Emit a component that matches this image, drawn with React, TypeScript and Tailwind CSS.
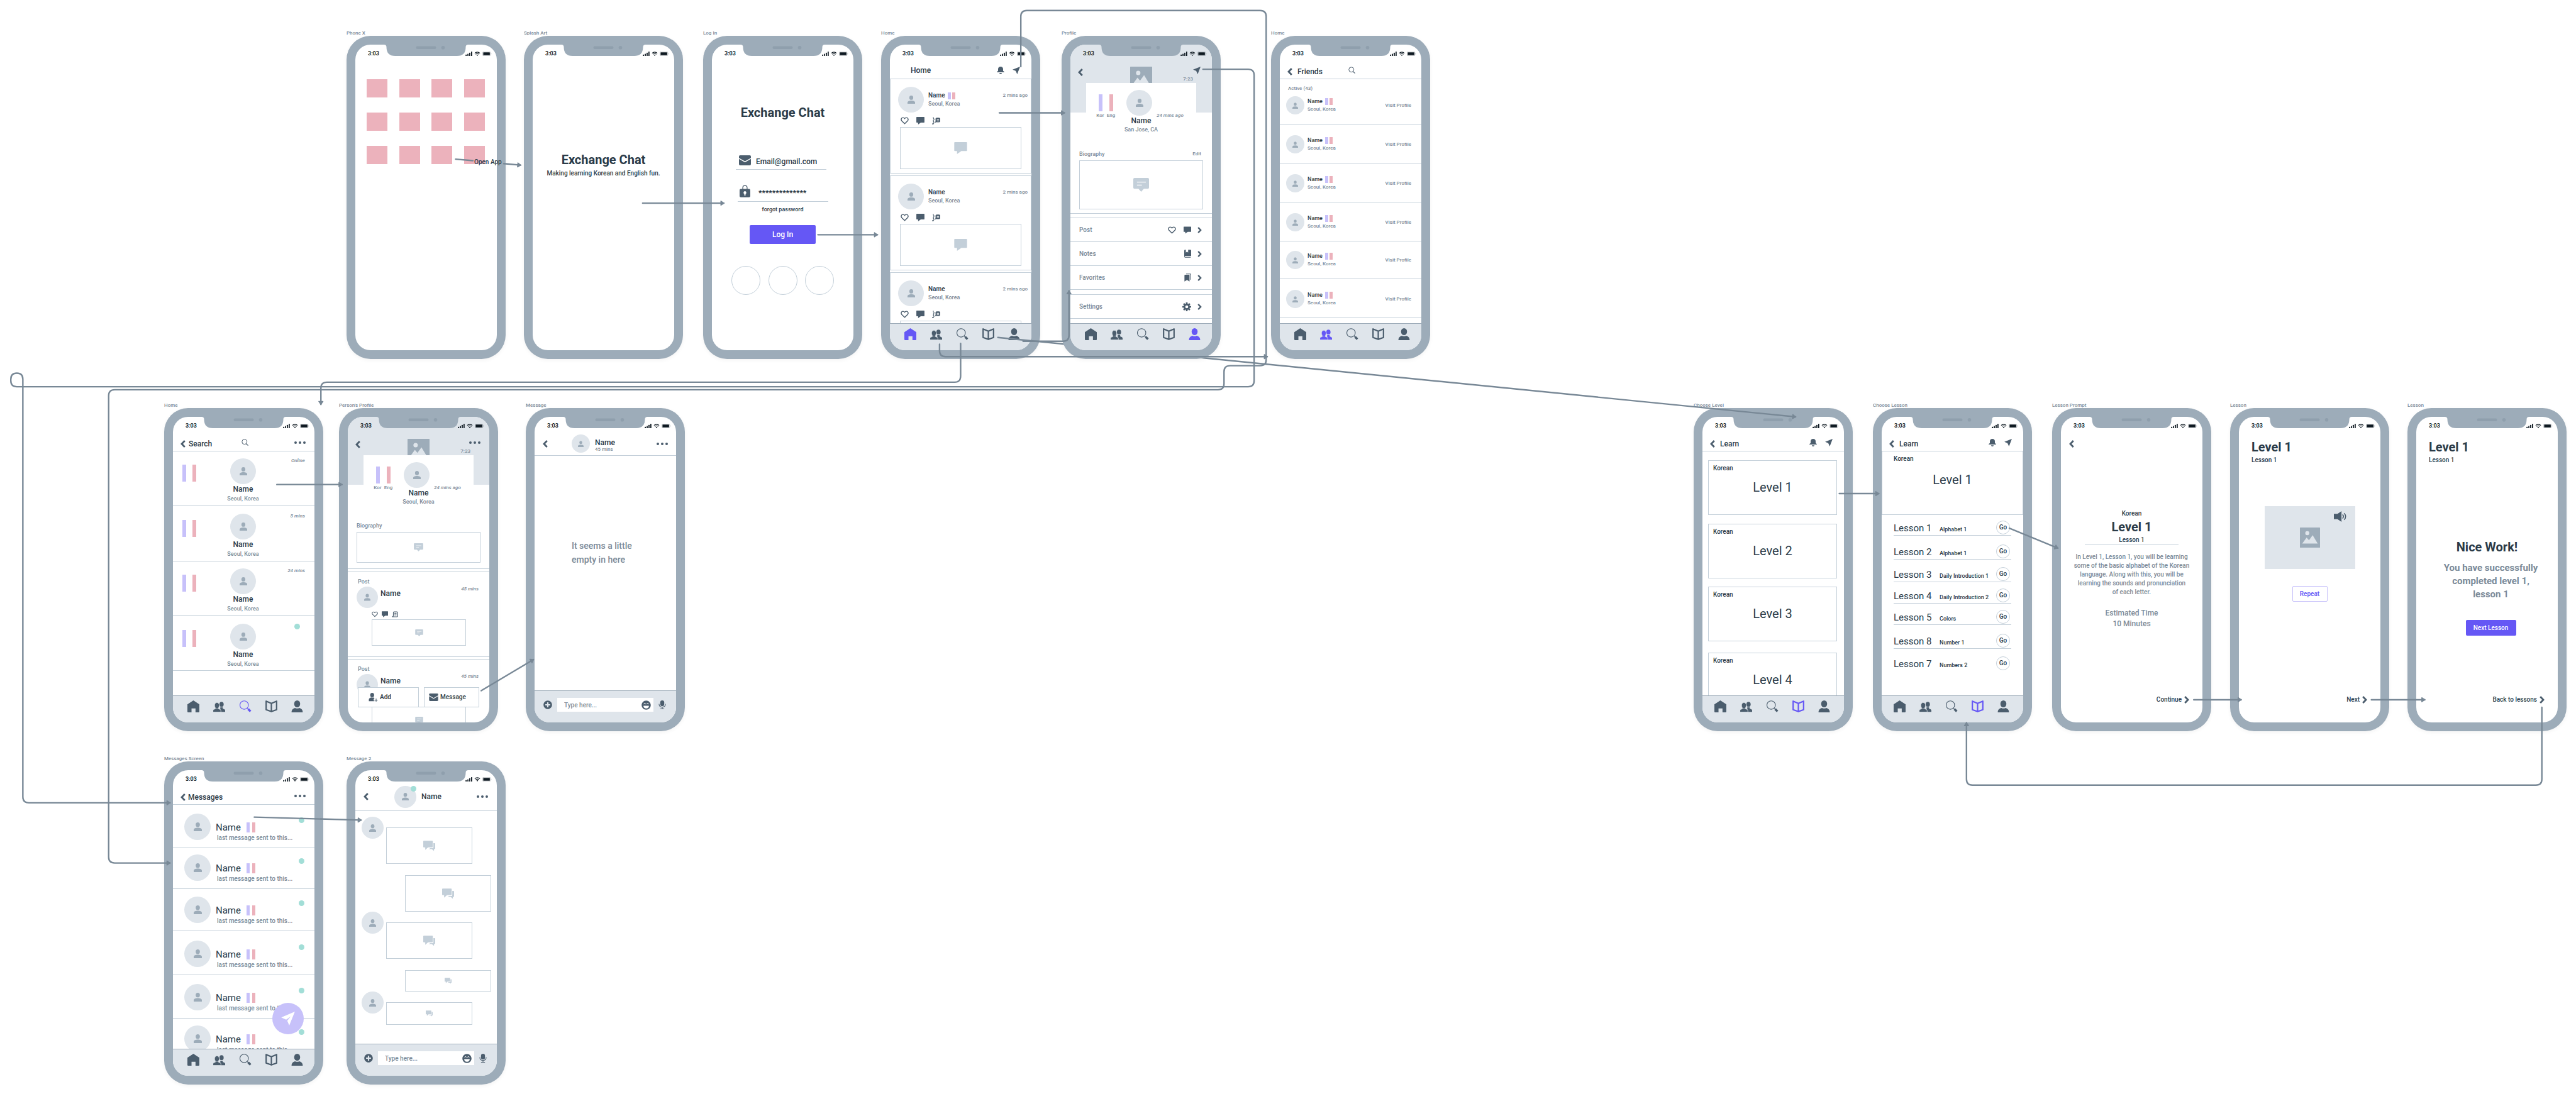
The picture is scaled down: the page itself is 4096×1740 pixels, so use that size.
import type { ReactNode } from "react";
import { FaLaughBeam, FaPlusCircle } from "react-icons/fa";

/* ---------------------------------- icons --------------------------------- */

type IconProps = { className?: string };

const PersonIcon = ({ className }: IconProps) => (
  <svg viewBox="0 0 60 65" fill="currentColor" className={className} aria-hidden="true">
    <ellipse cx="30" cy="17" rx="15.5" ry="17" />
    <path d="M0 65V55c0-10 14-15 30-15s30 5 30 15v10z" />
  </svg>
);

const HomeIcon = ({ className }: IconProps) => (
  <svg viewBox="0 0 96 96" fill="currentColor" className={className} aria-hidden="true">
    <path d="M48 0l48 31v59q0 6-6 6H65V64H33v32H6q-6 0-6-6V31z" />
  </svg>
);

const PeopleIcon = ({ className }: IconProps) => (
  <svg viewBox="0 0 96 96" fill="currentColor" className={className} aria-hidden="true">
    <ellipse cx="67" cy="31" rx="17" ry="20" />
    <path d="M96 92V81c0-8-8-10-17-14-3-1-3-5-2-11H57v36z" />
    <g stroke="#dfe5eb" strokeWidth="4">
      <path d="M-2 94V82c0-9 10-11 18-14 4-2 4-6 3-12h22c-1 6-1 10 3 12 8 3 18 5 18 14v12z" />
      <ellipse cx="30" cy="40" rx="19" ry="23" />
    </g>
    <path d="M20 50h20l1 12H19z" />
  </svg>
);

const NavSearchIcon = ({ className }: IconProps) => (
  <svg viewBox="0 0 92 92" fill="none" stroke="currentColor" className={className} aria-hidden="true">
    <circle cx="35" cy="36" r="32.5" strokeWidth="5.5" />
    <path d="M58 60l10 10" strokeWidth="5" />
    <path d="M66 67l18 18" strokeWidth="17" />
  </svg>
);

const BookIcon = ({ className }: IconProps) => (
  <svg viewBox="0 0 96 96" fill="none" stroke="currentColor" strokeWidth="11" strokeLinejoin="round" className={className} aria-hidden="true">
    <path d="M6 6l42 18L90 6v68L48 90 6 74zM48 24v66" />
  </svg>
);

const UserIcon = ({ className }: IconProps) => (
  <svg viewBox="0 0 90 96" fill="currentColor" className={className} aria-hidden="true">
    <ellipse cx="45" cy="28" rx="24" ry="28" />
    <path d="M0 96c0-20 9-31 28-36 11 6 23 6 34 0 19 5 28 16 28 36z" />
  </svg>
);

const BellIcon = ({ className }: IconProps) => (
  <svg viewBox="0 0 60 60" fill="currentColor" className={className} aria-hidden="true">
    <path d="M30 0c12 0 20 8 20 20v14l8 6q2 2 2 5H0q0-3 2-5l8-6V20C10 8 18 0 30 0z" />
    <path d="M20 51h20c0 5-4 9-10 9s-10-4-10-9z" />
  </svg>
);

const SendIcon = ({ className }: IconProps) => (
  <svg viewBox="0 0 60 60" fill="currentColor" className={className} aria-hidden="true">
    <path d="M60 0L0 24l25 10 12 26z" />
  </svg>
);

const PlaneIcon = ({ className }: IconProps) => (
  <svg viewBox="0 0 61 62" fill="currentColor" className={className} aria-hidden="true">
    <path d="M61 0L0 26l22 10 21-15-16 20 9 21z" />
  </svg>
);

const HeartIcon = ({ className }: IconProps) => (
  <svg viewBox="0 0 63 56" fill="none" stroke="currentColor" strokeWidth="7" strokeLinejoin="round" className={className} aria-hidden="true">
    <path d="M31.500 51L9 29C0 19 6 4.500 18 4.500c6 0 11 3 13.500 8C34 7.500 39 4.500 45 4.500c12 0 18 14.500 9 24.500z" />
  </svg>
);

const ChatIcon = ({ className }: IconProps) => (
  <svg viewBox="0 0 60 56" fill="currentColor" className={className} aria-hidden="true">
    <path d="M3 0h54a3 3 0 013 3v36a3 3 0 01-3 3H33L13 56V42H3a3 3 0 01-3-3V3a3 3 0 013-3z" />
  </svg>
);

const TranslateIcon = ({ className }: IconProps) => (
  <svg viewBox="0 0 63 56" fill="none" stroke="currentColor" className={className} aria-hidden="true">
    <path d="M10 0v9l7 7-8 11 5 6-5 5 6 6-5 9H2v-5" strokeWidth="5" />
    <path d="M22 41c5-2 7-5 7-9V13q0-6 6-6h20q6 0 6 6v19q0 6-6 6H30z" fill="currentColor" strokeWidth="4" />
    <path d="M37 19h17M37 29h17" stroke="#fff" strokeWidth="5" />
  </svg>
);

const ScrollIcon = ({ className }: IconProps) => (
  <svg viewBox="0 0 60 56" fill="none" stroke="currentColor" strokeWidth="7" strokeLinejoin="round" className={className} aria-hidden="true">
    <path d="M4 52c7-2 11-7 11-14V12q0-8 8-8h24q8 0 8 8v32q0 8-8 8z" />
    <path d="M25 18h20M25 34h20" />
  </svg>
);

const NoteBubbleIcon = ({ className }: IconProps) => (
  <svg viewBox="0 0 64 56" fill="currentColor" className={className} aria-hidden="true">
    <path d="M5 0h54a5 5 0 015 5v34a5 5 0 01-5 5H43L32 56 21 44H5a5 5 0 01-5-5V5a5 5 0 015-5z" />
    <path d="M15 17h36M15 29h20" stroke="#fff" strokeWidth="3" />
  </svg>
);

const ChatsIcon = ({ className }: IconProps) => (
  <svg viewBox="0 0 60 52" fill="currentColor" className={className} aria-hidden="true">
    <path d="M51 12h6q3 0 3 3v24q0 3-3 3h-3v9l-11-9H27l9-5h12q3 0 3-4z" />
    <path d="M3 0h42q3 0 3 3v27q0 3-3 3H24L10 46V33H3q-3 0-3-3V3q0-3 3-3z" />
  </svg>
);

const MailIcon = ({ className }: IconProps) => (
  <svg viewBox="0 0 60 50" fill="currentColor" className={className} aria-hidden="true">
    <path d="M6 0h48a6 6 0 016 6v7L30 30 0 13V6a6 6 0 016-6z" />
    <path d="M0 18l30 17 30-17v26a6 6 0 01-6 6H6a6 6 0 01-6-6z" />
  </svg>
);

const LockIcon = ({ className }: IconProps) => (
  <svg viewBox="0 0 54 62" fill="currentColor" className={className} aria-hidden="true">
    <path d="M16 22V14a11 11 0 0122 0v8" fill="none" stroke="currentColor" strokeWidth="4" />
    <rect y="20" width="54" height="42" rx="6" />
    <path d="M27 31a8 8 0 013 15v7h-6v-7a8 8 0 013-15z" fill="#fff" />
  </svg>
);

const PictureIcon = ({ className }: IconProps) => (
  <svg viewBox="0 0 60 60" className={className} aria-hidden="true">
    <rect width="60" height="60" rx="1" fill="#9dacb9" />
    <circle cx="22" cy="17" r="6" fill="#dfe5eb" />
    <path d="M7 48l13-18 7 8 11-15 15 25z" fill="#dfe5eb" />
  </svg>
);

const ChevronIcon = ({ className }: IconProps) => (
  <svg viewBox="0 0 20 30" fill="none" stroke="currentColor" strokeWidth="7" className={className} aria-hidden="true">
    <path d="M17 2.500L5 15l12 12.500" />
  </svg>
);

const ForwardIcon = ({ className }: IconProps) => (
  <svg viewBox="0 0 20 30" fill="none" stroke="currentColor" strokeWidth="7" className={className} aria-hidden="true">
    <path d="M3 2.500L15 15 3 27.500" />
  </svg>
);

const SearchIcon = ({ className }: IconProps) => (
  <svg viewBox="0 0 28 28" fill="none" stroke="currentColor" strokeWidth="2.500" className={className} aria-hidden="true">
    <circle cx="12" cy="12" r="10" />
    <path d="M18 19l9 8" strokeWidth="3" />
  </svg>
);

const NotebookIcon = ({ className }: IconProps) => (
  <svg viewBox="0 0 30 34" fill="currentColor" className={className} aria-hidden="true">
    <path d="M4 0h3v12l5-4 5 4V0h10q3 0 3 3v24H4q-2 0-2 2t2 2h24v3H4q-4 0-4-5V4q0-4 4-4z" />
  </svg>
);

const RibbonsIcon = ({ className }: IconProps) => (
  <svg viewBox="0 0 30 34" fill="currentColor" className={className} aria-hidden="true">
    <path d="M3 5h18q2 0 2 2v27l-11-7-11 7V7q0-2 2-2z" />
    <path d="M8 0h19q3 0 3 3v25l-3-3V3H8z" />
  </svg>
);

const GearIcon = ({ className }: IconProps) => (
  <svg viewBox="0 0 36 36" fill="currentColor" className={className} aria-hidden="true">
    {[0, 45, 90, 135].map((angle) => (
      <rect key={angle} x="14.500" y="0" width="7" height="36" rx="1" transform={`rotate(${angle} 18 18)`} />
    ))}
    <circle cx="18" cy="18" r="13" />
    <circle cx="18" cy="18" r="6" fill="#fff" />
  </svg>
);

const AddUserIcon = ({ className }: IconProps) => (
  <svg viewBox="0 0 40 40" fill="currentColor" className={className} aria-hidden="true">
    <ellipse cx="15" cy="10" rx="9" ry="10" />
    <path d="M0 38V31c0-6 5-8 11-10q4 2 8 0c3 1 5 2 6 3v3h-3v8h3v3z" />
    <path d="M33 26v14M26 33h14" stroke="currentColor" strokeWidth="3" />
  </svg>
);

const MicIcon = ({ className }: IconProps) => (
  <svg viewBox="0 0 32 40" fill="none" stroke="currentColor" strokeWidth="3" className={className} aria-hidden="true">
    <rect x="7" y="0" width="18" height="26" rx="9" fill="currentColor" stroke="none" />
    <path d="M1.500 16c0 9 6 14.500 14.500 14.500S30.500 25 30.500 16M16 31v7M7 38.500h18" />
  </svg>
);

const SpeakerIcon = ({ className }: IconProps) => (
  <svg viewBox="0 0 38 32" fill="none" stroke="currentColor" strokeWidth="3" className={className} aria-hidden="true">
    <path d="M0 8h11L23 0v32L11 24H0z" fill="currentColor" stroke="none" />
    <path d="M26 10c4 4 4 8 0 12M31 6c6 6 6 14 0 20" />
  </svg>
);

const SignalIcon = ({ className }: IconProps) => (
  <svg viewBox="0 0 18 12" fill="currentColor" className={className} aria-hidden="true">
    <rect x="0" y="8" width="3" height="4" rx="1" />
    <rect x="5" y="6" width="3" height="6" rx="1" />
    <rect x="10" y="3" width="3" height="9" rx="1" />
    <rect x="15" y="0" width="3" height="12" rx="1" />
  </svg>
);

const WifiIcon = ({ className }: IconProps) => (
  <svg viewBox="0 0 16 12" fill="none" stroke="currentColor" strokeWidth="2" className={className} aria-hidden="true">
    <path d="M1 4.500c4-4 10-4 14 0M3.500 7.500c2.500-2.500 6.500-2.500 9 0" />
    <path d="M5.800 9.300c1.300-1 3.100-1 4.400 0L8 12z" fill="currentColor" stroke="none" />
  </svg>
);

const BatteryIcon = ({ className }: IconProps) => (
  <svg viewBox="0 0 25 12" fill="currentColor" className={className} aria-hidden="true">
    <rect x="0.500" y="0.500" width="21" height="11" rx="2.500" fill="none" stroke="currentColor" opacity="0.4" />
    <rect x="2" y="2" width="18" height="8" rx="1" />
    <path d="M23 4v4c1.500-.5 1.500-3.500 0-4z" opacity="0.4" />
  </svg>
);

/* ------------------------------ shared pieces ----------------------------- */

const StatusBar = () => (
  <div className="flex h-7 shrink-0 text-[#0f1a22]">
    <div className="flex w-[49px] shrink-0 items-center pl-5 text-[9px] font-semibold">3:03</div>
    <div className="relative h-[18px] flex-1">
      <svg viewBox="0 0 134 18" className="absolute -left-1 top-0 h-[18px] w-[135px]" fill="#9dacb9" aria-hidden="true">
        <path d="M0 0h134q-4 0-4 4 0 14-14 14H18Q4 18 4 4 4 0 0 0z" />
        <rect x="51" y="2.500" width="32" height="4.500" rx="2.200" fill="#8f9fad" />
        <circle cx="94" cy="4.800" r="2.800" fill="#8f9fad" />
      </svg>
    </div>
    <div className="flex w-[50px] shrink-0 items-center gap-[3px] pr-2">
      <SignalIcon className="h-[7px] w-[11px]" />
      <WifiIcon className="h-[7px] w-[10px]" />
      <BatteryIcon className="h-[7px] w-[15px]" />
    </div>
  </div>
);

const navItems = [
  { id: "home", Icon: HomeIcon },
  { id: "people", Icon: PeopleIcon },
  { id: "search", Icon: NavSearchIcon },
  { id: "learn", Icon: BookIcon },
  { id: "profile", Icon: UserIcon },
];

const NavBar = ({ active, pad = "pl-[23px] pr-[18px]" }: { active?: string; pad?: string }) => (
  <nav className={`flex h-[43px] shrink-0 items-start justify-between border-t border-[#9dacb9] bg-[#dfe5eb] pt-[7px] ${pad}`}>
    {navItems.map(({ id, Icon }) => (
      <button key={id} type="button" aria-label={id} className={id === active ? "text-[#6557f5]" : "text-[#4b5d6d]"}>
        <Icon className="h-[19px] w-[19px]" />
      </button>
    ))}
  </nav>
);

const InputBar = ({ id }: { id: string }) => (
  <div className="flex h-[51px] shrink-0 items-start gap-2 border-t border-[#9dacb9] bg-[#dfe5eb] pl-[14px] pt-[11px] text-[#4b5d6d]">
    <button type="button" aria-label="Attach" className="mt-1">
      <FaPlusCircle className="h-[14px] w-[14px]" />
    </button>
    <div className="flex h-[22px] w-[153px] items-center bg-white pr-1">
      <input
        id={id}
        aria-label="Message"
        placeholder="Type here..."
        className="min-w-0 flex-1 bg-transparent pl-[11px] text-[10px] outline-none placeholder:text-[#7b8a98]"
      />
      <button type="button" aria-label="Emoji">
        <FaLaughBeam className="h-[15px] w-[15px]" />
      </button>
    </div>
    <button type="button" aria-label="Record" className="mt-1">
      <MicIcon className="h-[14px] w-[12px]" />
    </button>
  </div>
);

const Phone = ({ label, at, cover = false, children }: { label: string; at: string; cover?: boolean; children?: ReactNode }) => (
  <figure className={`absolute ${at}`}>
    <figcaption className="text-[8px] leading-[9px] text-[#7b8a98]">{label}</figcaption>
    <div className="rounded-[38px] bg-[#9dacb9] p-[14px] shadow-[0_2px_6px_rgba(0,0,0,0.05)]">
      <div className="relative flex h-[486px] w-[225px] flex-col overflow-hidden rounded-[24px] bg-white">
        {!cover && <StatusBar />}
        {children}
      </div>
    </div>
  </figure>
);

const Avatar = ({ box = "h-[41px] w-[41px]", icon = "h-[13px] w-[12px]" }: { box?: string; icon?: string }) => (
  <div className={`flex shrink-0 items-center justify-center rounded-full bg-[#dfe5eb] text-[#9dacb9] ${box}`}>
    <PersonIcon className={icon} />
  </div>
);

const Flags = ({ bar = "h-[11px] w-[5px]", gap = "gap-[2px]" }: { bar?: string; gap?: string }) => (
  <div className={`flex ${gap}`}>
    <span className={`bg-[#c7c1fa] ${bar}`} />
    <span className={`bg-[#ecb2bc] ${bar}`} />
  </div>
);

const Dots = () => (
  <button type="button" aria-label="More" className="flex h-3 items-center gap-[3px]">
    <span className="h-1 w-1 rounded-full bg-[#4b5d6d]" />
    <span className="h-1 w-1 rounded-full bg-[#4b5d6d]" />
    <span className="h-1 w-1 rounded-full bg-[#4b5d6d]" />
  </button>
);

const Back = () => (
  <button type="button" aria-label="Back" className="text-[#4b5d6d]">
    <ChevronIcon className="h-3 w-2" />
  </button>
);

const BellAndSend = () => (
  <div className="flex gap-[13px] pr-1 text-[#4b5d6d]">
    <button type="button" aria-label="Notifications">
      <BellIcon className="h-3 w-3" />
    </button>
    <button type="button" aria-label="Messages">
      <SendIcon className="h-3 w-3" />
    </button>
  </div>
);

const SearchButton = () => (
  <button type="button" aria-label="Search" className="pb-1 pl-[5px] text-[#4b5d6d]">
    <SearchIcon className="h-[11px] w-[11px]" />
  </button>
);

type HeaderProps = { title?: string; gap?: string; back?: boolean; center?: ReactNode; right?: ReactNode };

const Header = ({ title, gap = "gap-1", back = true, center, right }: HeaderProps) => (
  <header className="grid h-[27px] shrink-0 grid-cols-[1fr_auto_1fr] items-center border-b border-[#c3cfd9] pl-3 pr-[14px]">
    <div className={`flex items-center ${back ? "pt-1" : "pl-[21px]"} ${gap}`}>
      {back && <Back />}
      <h2 className="text-[12px]">{title}</h2>
    </div>
    <div>{center}</div>
    <div className="justify-self-end">{right}</div>
  </header>
);

const Bubble = ({ box, children }: { box: string; children: ReactNode }) => (
  <div className={`flex items-center justify-center border border-[#c3cfd9] text-[#c3cfd9] ${box}`}>{children}</div>
);

const ProfileTop = ({ location, right, timeGap }: { location: string; right: ReactNode; timeGap: string }) => (
  <section className="shrink-0">
    <div className="h-[108px] bg-[#dfe5eb]">
      <StatusBar />
      <div className="grid h-[33px] grid-cols-[1fr_35px_1fr]">
        <div className="pl-3 pt-[9px]">
          <Back />
        </div>
        <div className="h-[26px] self-end overflow-hidden">
          <PictureIcon className="h-[35px] w-[35px]" />
        </div>
        <div className="flex flex-col items-end gap-1 pr-[14px] pt-[7px]">
          {right}
          <span className={`text-[8px] text-[#7b8a98] ${timeGap}`}>7:23</span>
        </div>
      </div>
    </div>
    <div className="relative mx-[25px] -mt-[47px] bg-white pt-[11px]">
      <div className="grid h-[41px] grid-cols-[64px_41px_1fr]">
        <div className="flex pl-[14px] pt-[7px] text-[8px] text-[#7b8a98]">
          <div className="flex w-[17px] flex-col items-center gap-[3px]">
            <span className="h-[27px] w-[6px] shrink-0 bg-[#c7c1fa]" />
            Kor
          </div>
          <div className="flex w-[17px] flex-col items-center gap-[3px]">
            <span className="h-[27px] w-[6px] shrink-0 bg-[#ecb2bc]" />
            Eng
          </div>
        </div>
        <Avatar />
        <span className="self-end whitespace-nowrap pl-[7px] text-[8px] italic text-[#7b8a98]">24 mins ago</span>
      </div>
      <h3 className="text-center text-[12px] leading-4">Name</h3>
      <p className="text-center text-[9px] leading-3 text-[#7b8a98]">{location}</p>
    </div>
  </section>
);

/* --------------------------------- screens -------------------------------- */

const PhoneHome = () => (
  <div className="grid grid-cols-4 justify-between gap-y-6 pl-[18px] pr-[1px] pt-[27px]">
    {Array.from({ length: 12 }, (_, i) => (
      <span key={i} className="h-[29px] w-[33px] bg-[#ecb2bc]" />
    ))}
  </div>
);

const Splash = () => (
  <div className="pt-[143px] text-center">
    <h1 className="text-[20px] font-bold leading-6">Exchange Chat</h1>
    <p className="pt-1 text-[10px] leading-3">Making learning Korean and English fun.</p>
  </div>
);

const Login = () => (
  <form className="flex flex-col pt-[68px]">
    <h1 className="text-center text-[20px] font-bold leading-6">Exchange Chat</h1>
    <label className="ml-[38px] mt-14 flex h-[23px] w-[144px] items-start gap-2 border-b border-[#c3cfd9] pl-[5px]">
      <MailIcon className="h-4 w-[19px] shrink-0 text-[#4b5d6d]" />
      <input aria-label="Email" type="text" defaultValue="Email@gmail.com" className="h-[20px] min-w-0 flex-1 text-[12px] outline-none" />
    </label>
    <label className="ml-[41px] mt-6 flex h-[27px] w-[144px] items-start gap-[13px] border-b border-[#c3cfd9] pl-[3px]">
      <LockIcon className="h-5 w-[17px] shrink-0 text-[#4b5d6d]" />
      <input aria-label="Password" type="text" defaultValue="**************" className="h-[26px] min-w-0 flex-1 text-[12px] font-bold outline-none" />
    </label>
    <a href="#forgot" className="mt-[7px] self-center text-[9px] leading-[10px]">
      forgot password
    </a>
    <button type="button" className="mt-5 h-[30px] w-[105px] self-center rounded-[2px] bg-[#6557f5] text-[12px] text-white">
      Log In
    </button>
    <div className="mx-[31px] mt-[35px] flex justify-between">
      <span className="h-[46px] w-[46px] rounded-full border border-[#c3cfd9]" />
      <span className="h-[46px] w-[46px] rounded-full border border-[#c3cfd9]" />
      <span className="h-[46px] w-[46px] rounded-full border border-[#c3cfd9]" />
    </div>
  </form>
);

const FeedCard = ({ flags = false }: { flags?: boolean }) => (
  <article className="shrink-0 border border-t-0 border-[#c3cfd9] pb-[6px] pt-3">
    <div className="flex items-center pl-3 pr-[5px]">
      <Avatar />
      <div className="flex-1 pl-[7px]">
        <div className="flex h-[13px] items-center gap-1">
          <h3 className="text-[10px]">Name</h3>
          {flags && <Flags />}
          <span className="ml-auto text-[8px] text-[#7b8a98]">2 mins ago</span>
        </div>
        <p className="text-[9px] leading-[13px] text-[#7b8a98]">Seoul, Korea</p>
      </div>
    </div>
    <div className="mt-[7px] flex gap-3 pl-4 text-[#4b5d6d]">
      <button type="button" aria-label="Like">
        <HeartIcon className="h-3 w-[13px]" />
      </button>
      <button type="button" aria-label="Comment">
        <ChatIcon className="h-3 w-[13px]" />
      </button>
      <button type="button" aria-label="Translate">
        <TranslateIcon className="h-3 w-[13px]" />
      </button>
    </div>
    <Bubble box="mx-[15px] mt-1 h-[67px]">
      <ChatIcon className="h-[19px] w-[21px]" />
    </Bubble>
  </article>
);

const Feed = () => (
  <>
    <Header title="Home" back={false} right={<BellAndSend />} />
    <main className="flex min-h-0 flex-1 flex-col overflow-hidden">
      <FeedCard flags />
      <div className="h-1 shrink-0 border-b border-[#c3cfd9]" />
      <FeedCard />
      <div className="h-1 shrink-0 border-b border-[#c3cfd9]" />
      <FeedCard />
    </main>
    <NavBar active="home" />
  </>
);

const MenuRow = ({ title, children }: { title: string; children: ReactNode }) => (
  <li className="flex h-[38px] items-center border-b border-[#c3cfd9] pl-[14px] pr-4 text-[#4b5d6d]">
    <span className="flex-1 text-[10px] text-[#7b8a98]">{title}</span>
    <span className="flex items-center gap-3 pr-[10px]">{children}</span>
    <ForwardIcon className="h-[10px] w-[7px]" />
  </li>
);

const Profile = () => (
  <>
    <ProfileTop
      location="San Jose, CA"
      timeGap="mr-4"
      right={
        <button type="button" aria-label="Messages" className="mr-1 text-[#4b5d6d]">
          <SendIcon className="h-3 w-3" />
        </button>
      }
    />
    <div className="mt-[27px] flex shrink-0 justify-between pl-[14px] pr-[17px] leading-3 text-[#7b8a98]">
      <h4 className="text-[9px]">Biography</h4>
      <button type="button" className="text-[8px]">
        Edit
      </button>
    </div>
    <Bubble box="mx-[14px] mt-1 h-[78px] shrink-0">
      <NoteBubbleIcon className="h-[22px] w-[25px]" />
    </Bubble>
    <div className="mt-[6px] h-2 shrink-0 border-y border-[#c3cfd9]" />
    <ul className="min-h-0 flex-1">
      <MenuRow title="Post">
        <HeartIcon className="h-3 w-[13px]" />
        <ChatIcon className="h-3 w-[12px]" />
      </MenuRow>
      <MenuRow title="Notes">
        <NotebookIcon className="h-[13px] w-[11px]" />
      </MenuRow>
      <MenuRow title="Favorites">
        <RibbonsIcon className="h-[13px] w-[11px]" />
      </MenuRow>
      <li className="h-2 border-b border-[#c3cfd9]" />
      <MenuRow title="Settings">
        <GearIcon className="h-[14px] w-[14px]" />
      </MenuRow>
    </ul>
    <NavBar active="profile" />
  </>
);

const friendRows = ["pt-[7px]", "pt-[17px]", "pt-[17px]", "pt-[17px]", "pt-[15px]", "pt-[17px]"];

const Friends = () => (
  <>
    <Header title="Friends" gap="gap-2" center={<SearchButton />} right={<span className="block w-[18px]" />} />
    <main className="min-h-0 flex-1 overflow-hidden">
      <p className="pl-[13px] pt-[10px] text-[8px] leading-[10px] text-[#7b8a98]">Active (43)</p>
      <ul>
        {friendRows.map((pt, i) => (
          <li key={i} className={`flex items-center border-b border-[#c3cfd9] pb-[15px] pl-[10px] pr-4 ${pt}`}>
            <Avatar box="h-[29px] w-[29px]" icon="h-[10px] w-[9px]" />
            <div className="flex-1 pl-[5px]">
              <div className="flex h-3 items-center gap-1">
                <h3 className="text-[9px]">Name</h3>
                <Flags />
              </div>
              <p className="text-[8px] leading-3 text-[#7b8a98]">Seoul, Korea</p>
            </div>
            <a href="#profile" className="text-[8px] text-[#7b8a98]">
              Visit Profile
            </a>
          </li>
        ))}
      </ul>
    </main>
    <NavBar active="people" />
  </>
);

const searchRows = [
  { box: "h-[86px] pt-[11px]", status: "Online" },
  { box: "h-[89px] pt-[13px]", status: "5 mins" },
  { box: "h-[86px] pt-[11px]", status: "24 mins" },
  { box: "h-[88px] pt-[13px]", status: "" },
];

const SearchPeople = () => (
  <>
    <Header title="Search" gap="gap-[5px]" center={<SearchButton />} right={<Dots />} />
    <ul className="min-h-0 flex-1 overflow-hidden">
      {searchRows.map(({ box, status }) => (
        <li key={status} className={`grid grid-cols-[1fr_auto_1fr] border-b border-[#c3cfd9] pl-[13px] pr-[15px] ${box}`}>
          <div className="pl-[2px] pt-[10px]">
            <Flags bar="h-[27px] w-[6px]" gap="gap-[10px]" />
          </div>
          <div className="flex flex-col items-center">
            <Avatar />
            <h3 className="text-[12px] leading-4">Name</h3>
            <p className="text-[9px] leading-[14px] text-[#7b8a98]">Seoul, Korea</p>
          </div>
          <div className="justify-self-end text-[8px] italic text-[#7b8a98]">
            {status || <span className="mr-2 block h-[9px] w-[9px] rounded-full bg-[#a2ded7]" />}
          </div>
        </li>
      ))}
    </ul>
    <NavBar active="search" />
  </>
);

const ProfilePost = () => (
  <article className="shrink-0 pb-[17px] pl-[14px] pr-[17px] pt-[9px]">
    <h4 className="pl-[2px] text-[9px] leading-3 text-[#7b8a98]">Post</h4>
    <div className="mt-[2px] flex items-start">
      <Avatar box="h-[34px] w-[34px]" icon="h-[12px] w-[10px]" />
      <h3 className="pl-1 pt-1 text-[12px] leading-[14px]">Name</h3>
      <span className="ml-auto text-[8px] italic text-[#7b8a98]">45 mins</span>
    </div>
    <div className="mt-[5px] flex gap-[6px] pl-6 text-[#4b5d6d]">
      <HeartIcon className="h-[10px] w-[10px]" />
      <ChatIcon className="h-[10px] w-[10px]" />
      <ScrollIcon className="h-[10px] w-[10px]" />
    </div>
    <Bubble box="ml-6 mt-[3px] h-[42px] w-[150px]">
      <NoteBubbleIcon className="h-[11px] w-[13px]" />
    </Bubble>
  </article>
);

const PersonProfile = () => (
  <>
    <ProfileTop location="Seoul, Korea" timeGap="mr-4" right={<Dots />} />
    <h4 className="mt-[26px] shrink-0 pl-[14px] text-[9px] leading-3 text-[#7b8a98]">Biography</h4>
    <Bubble box="mx-[14px] mt-1 h-[49px] shrink-0">
      <NoteBubbleIcon className="h-[13px] w-[15px]" />
    </Bubble>
    <div className="mt-[9px] h-[6px] shrink-0 border-y border-[#c3cfd9]" />
    <ProfilePost />
    <div className="h-[5px] shrink-0 border-y border-[#c3cfd9]" />
    <ProfilePost />
    <div className="absolute inset-x-4 bottom-6 flex gap-2 text-[10px]">
      <button type="button" className="flex h-8 flex-1 items-center gap-[3px] border border-[#c3cfd9] bg-white pl-4">
        <AddUserIcon className="h-[14px] w-[15px] text-[#4b5d6d]" />
        Add
      </button>
      <button type="button" className="flex h-8 flex-1 items-center gap-[3px] border border-[#c3cfd9] bg-white pl-[7px]">
        <MailIcon className="h-3 w-[15px] text-[#4b5d6d]" />
        Message
      </button>
    </div>
  </>
);

const EmptyMessage = () => (
  <>
    <header className="flex h-[34px] shrink-0 items-center border-b border-[#c3cfd9] pb-1 pl-[13px] pr-[13px]">
      <Back />
      <div className="pl-[38px]">
        <Avatar box="h-[29px] w-[29px]" icon="h-[10px] w-[9px]" />
      </div>
      <div className="pl-2 pt-[5px]">
        <h2 className="text-[12px]">Name</h2>
        <p className="text-[8px] leading-[9px] text-[#7b8a98]">45 mins</p>
      </div>
      <div className="ml-auto">
        <Dots />
      </div>
    </header>
    <p className="flex-1 pl-[59px] pt-[132px] text-[14px] leading-[22px] text-[#7b8a98]">
      It seems a little
      <br />
      empty in here
    </p>
    <InputBar id="message-empty" />
  </>
);

const threadRows = [
  "h-[69px] pt-[14px]",
  "h-[65px] pt-[10px]",
  "h-[67px] pt-[12px]",
  "h-[70px] pt-[15px]",
  "h-[69px] pt-[14px]",
  "h-[69px] pt-[11px]",
];

const Messages = () => (
  <>
    <Header title="Messages" right={<Dots />} />
    <ul className="min-h-0 flex-1 overflow-hidden">
      {threadRows.map((box, i) => (
        <li key={i} className={`flex items-start border-b border-[#c3cfd9] pl-[18px] pr-4 ${box}`}>
          <Avatar box="h-[42px] w-[42px]" icon="h-[14px] w-[13px]" />
          <div className="pl-2 pt-3">
            <div className="flex h-5 items-center gap-[9px]">
              <h3 className="text-[15px] font-normal">Name</h3>
              <Flags bar="h-4 w-[5px]" gap="gap-1" />
            </div>
            <p className="whitespace-nowrap pl-[2px] text-[10px] leading-[13px] text-[#7b8a98]">last message sent to this...</p>
          </div>
          <span className="ml-auto mt-[6px] h-[9px] w-[9px] shrink-0 rounded-full bg-[#a2ded7]" />
        </li>
      ))}
    </ul>
    <button
      type="button"
      aria-label="New message"
      className="absolute bottom-[66px] right-[17px] flex h-[50px] w-[50px] items-center justify-center rounded-full bg-[#c7c1fa] text-white"
    >
      <PlaneIcon className="h-[22px] w-[22px]" />
    </button>
    <NavBar />
  </>
);

const Received = ({ box, mt, icon }: { box: string; mt: string; icon: string }) => (
  <li className={`flex items-start gap-1 pl-[10px] ${mt}`}>
    <Avatar box="h-[35px] w-[35px]" icon="h-[12px] w-[11px]" />
    <Bubble box={`mt-[17px] w-[137px] ${box}`}>
      <ChatsIcon className={icon} />
    </Bubble>
  </li>
);

const Sent = ({ box, icon }: { box: string; icon: string }) => (
  <li className="mt-[18px] flex justify-end pr-[9px]">
    <Bubble box={`w-[137px] ${box}`}>
      <ChatsIcon className={icon} />
    </Bubble>
  </li>
);

const Conversation = () => (
  <>
    <header className="flex h-[37px] shrink-0 items-center border-b border-[#c3cfd9] pb-2 pl-[13px] pr-[14px]">
      <Back />
      <div className="relative ml-[41px]">
        <Avatar box="h-[35px] w-[35px]" icon="h-[12px] w-[11px]" />
        <span className="absolute right-0 top-0 h-[9px] w-[9px] rounded-full bg-[#a2ded7]" />
      </div>
      <h2 className="pl-2 text-[12px]">Name</h2>
      <div className="ml-auto">
        <Dots />
      </div>
    </header>
    <ul className="min-h-0 flex-1 overflow-hidden">
      <Received mt="mt-[9px]" box="h-[58px]" icon="h-[17px] w-[19px]" />
      <Sent box="h-[58px]" icon="h-[17px] w-[19px]" />
      <Received mt="" box="h-[58px]" icon="h-[17px] w-[19px]" />
      <Sent box="h-[34px]" icon="h-[10px] w-[11px]" />
      <Received mt="" box="h-[36px]" icon="h-[10px] w-[11px]" />
    </ul>
    <InputBar id="message-thread" />
  </>
);

const levels = [
  { name: "Level 1", mt: "mt-[14px]" },
  { name: "Level 2", mt: "mt-[14px]" },
  { name: "Level 3", mt: "mt-[13px]" },
  { name: "Level 4", mt: "mt-[18px]" },
];

const ChooseLevel = () => (
  <>
    <Header title="Learn" gap="gap-2" right={<BellAndSend />} />
    <main className="flex min-h-0 flex-1 flex-col overflow-hidden">
      {levels.map(({ name, mt }) => (
        <section key={name} className={`ml-[9px] mr-[11px] h-[87px] shrink-0 border border-[#c3cfd9] pt-[6px] ${mt}`}>
          <p className="pl-[7px] text-[10px] leading-3">Korean</p>
          <h3 className="pt-3 text-center text-[20px] font-normal leading-6">{name}</h3>
        </section>
      ))}
    </main>
    <NavBar active="learn" pad="pl-[19px] pr-[22px]" />
  </>
);

const lessons = [
  { name: "Lesson 1", topic: "Alphabet 1", box: "h-[33px] border-b" },
  { name: "Lesson 2", topic: "Alphabet 1", box: "h-[38px] border-b" },
  { name: "Lesson 3", topic: "Daily Introduction 1", box: "h-[36px] border-b" },
  { name: "Lesson 4", topic: "Daily Introduction 2", box: "h-[34px] border-b" },
  { name: "Lesson 5", topic: "Colors", box: "h-[34px] border-b" },
  { name: "Lesson 8", topic: "Number 1", box: "h-[38px] border-b" },
  { name: "Lesson 7", topic: "Numbers 2", box: "h-[35px]" },
];

const ChooseLesson = () => (
  <>
    <Header title="Learn" gap="gap-2" right={<BellAndSend />} />
    <section className="h-[101px] shrink-0 border border-t-0 border-[#c3cfd9] pt-[6px]">
      <p className="pl-[18px] text-[10px] leading-3">Korean</p>
      <h3 className="pt-[15px] text-center text-[20px] font-normal leading-6">Level 1</h3>
    </section>
    <ul className="mx-[19px] min-h-0 flex-1">
      {lessons.map(({ name, topic, box }) => (
        <li key={name} className={`flex items-end border-[#c3cfd9] pb-[1px] pr-[2px] ${box}`}>
          <h4 className="w-[73px] text-[15px] font-normal leading-5">{name}</h4>
          <p className="flex-1 whitespace-nowrap text-[9px] leading-4">{topic}</p>
          <button type="button" className="h-[22px] w-[22px] shrink-0 rounded-full border border-[#c3cfd9] bg-white text-[10px]">
            Go
          </button>
        </li>
      ))}
    </ul>
    <NavBar active="learn" pad="pl-[19px] pr-[22px]" />
  </>
);

const StepLink = ({ children }: { children: string }) => (
  <a href="#next" className="mb-[30px] mt-auto flex h-3 items-center gap-1 self-end pr-[21px] text-[10px]">
    {children}
    <ForwardIcon className="h-3 w-2 text-[#4b5d6d]" />
  </a>
);

const LessonPrompt = () => (
  <>
    <div className="flex h-[27px] shrink-0 items-center pl-[13px] pt-[3px]">
      <Back />
    </div>
    <main className="flex flex-1 flex-col items-center pt-[93px] text-center">
      <p className="text-[10px] leading-3">Korean</p>
      <h2 className="pt-[3px] text-[20px] font-bold leading-6">Level 1</h2>
      <p className="mt-[2px] w-[149px] border-b border-[#c3cfd9] text-[10px] leading-[13px]">Lesson 1</p>
      <p className="pt-[13px] text-[10px] leading-[14px] text-[#7b8a98]">
        In Level 1, Lesson 1, you will be learning
        <br />
        some of the basic alphabet of the Korean
        <br />
        language. Along with this, you will be
        <br />
        learning the sounds and pronunciation
        <br />
        of each letter.
      </p>
      <p className="pt-[18px] text-[12px] leading-[17px] text-[#7b8a98]">
        Estimated Time
        <br />
        10 Minutes
      </p>
      <StepLink>Continue</StepLink>
    </main>
  </>
);

const LessonTitle = () => (
  <div className="pl-5 pt-2">
    <h2 className="text-[20px] font-bold leading-6">Level 1</h2>
    <p className="pt-[3px] text-[10px] leading-3">Lesson 1</p>
  </div>
);

const LessonCard = () => (
  <>
    <LessonTitle />
    <main className="flex flex-1 flex-col">
      <div className="relative mx-auto mt-[67px] flex h-[100px] w-[144px] items-center justify-center bg-[#dfe5eb]">
        <PictureIcon className="h-8 w-8" />
        <button type="button" aria-label="Play sound" className="absolute right-[14px] top-2 text-[#4b5d6d]">
          <SpeakerIcon className="h-[17px] w-5" />
        </button>
      </div>
      <button type="button" className="mx-auto mt-[27px] h-[25px] w-14 rounded-[2px] border border-[#c7c1fa] text-[10px] text-[#6557f5]">
        Repeat
      </button>
      <StepLink>Next</StepLink>
    </main>
  </>
);

const LessonDone = () => (
  <>
    <LessonTitle />
    <main className="flex flex-1 flex-col pt-[120px] text-center">
      <h3 className="text-[20px] font-bold leading-6">Nice Work!</h3>
      <p className="pl-3 pt-[11px] text-[15px] font-bold leading-[21px] text-[#7b8a98]">
        You have successfully
        <br />
        completed level 1,
        <br />
        lesson 1
      </p>
      <div className="pl-3 pt-[30px]">
        <button type="button" className="h-[25px] w-20 rounded-[2px] bg-[#6557f5] text-[10px] text-white">
          Next Lesson
        </button>
      </div>
      <StepLink>Back to lessons</StepLink>
    </main>
  </>
);

/* ------------------------------- connectors ------------------------------- */

type Point = [number, number];

const roundedPath = (points: Point[], radius = 16) => {
  let d = `M${points[0][0]} ${points[0][1]}`;
  for (let i = 1; i < points.length - 1; i++) {
    const [px, py] = points[i - 1];
    const [x, y] = points[i];
    const [nx, ny] = points[i + 1];
    const inLength = Math.hypot(x - px, y - py);
    const outLength = Math.hypot(nx - x, ny - y);
    const r = Math.min(radius, inLength / 2, outLength / 2);
    d += `L${x - ((x - px) / inLength) * r} ${y - ((y - py) / inLength) * r}`;
    d += `Q${x} ${y} ${x + ((nx - x) / outLength) * r} ${y + ((ny - y) / outLength) * r}`;
  }
  const last = points[points.length - 1];
  return `${d}L${last[0]} ${last[1]}`;
};

const arrows: Point[][] = [
  [[1338, 435], [1383, 439]],
  [[1707, 540], [1923, 540]],
  [[2173, 624], [2331, 624]],
  [[2712, 177], [2712, 28], [3364, 28], [3364, 972], [3252, 972], [3252, 1036], [288, 1036], [288, 2294], [451, 2294]],
  [[3196, 184], [3332, 184], [3332, 1028], [28, 1028], [28, 992], [60, 992], [60, 2134], [451, 2134]],
  [[2655, 300], [2828, 300]],
  [[2496, 915], [2496, 948], [3367, 948]],
  [[2552, 913], [2552, 1016], [852, 1016], [852, 1075]],
  [[2718, 907], [2840, 907], [2840, 773]],
  [[735, 1288], [908, 1288]],
  [[1278, 1836], [1417, 1753]],
  [[675, 2172], [959, 2180]],
  [[4887, 1312], [4992, 1312]],
  [[5339, 1404], [5468, 1457]],
  [[5829, 1860], [5955, 1860]],
  [[6301, 1860], [6443, 1860]],
  [[6754, 1880], [6754, 2087], [5225, 2087], [5225, 1921]],
];

const Connectors = ({ id, paths, children }: { id: string; paths: Point[][]; children?: ReactNode }) => (
  <svg
    viewBox="0 0 6844 2908"
    className="pointer-events-none absolute left-0 top-0 h-[1740px] w-[4096px]"
    fill="none"
    stroke="#788896"
    strokeWidth="4"
    strokeLinecap="round"
    aria-hidden="true"
  >
    <defs>
      <marker id={id} viewBox="0 0 12 16" refX="10" refY="8" markerWidth="12" markerHeight="16" markerUnits="userSpaceOnUse" orient="auto">
        <path d="M2 2.500L10 8 2 13.500z" fill="#788896" stroke="#788896" strokeWidth="2.500" strokeLinejoin="round" />
      </marker>
    </defs>
    {paths.map((points, i) => (
      <path key={i} d={roundedPath(points)} markerEnd={`url(#${id})`} />
    ))}
    {children}
  </svg>
);

/* ---------------------------------- page ---------------------------------- */

export default function App() {
  return (
    <div className="relative min-h-screen w-full overflow-hidden bg-white font-['Roboto',sans-serif] font-medium leading-none text-[#2b3b48]">
      <Phone label="Phone X" at="left-[551px] top-[48px]">
        <PhoneHome />
      </Phone>
      <Phone label="Splash Art" at="left-[833px] top-[48px]">
        <Splash />
      </Phone>
      <Phone label="Log In" at="left-[1118px] top-[48px]">
        <Login />
      </Phone>
      <Phone label="Home" at="left-[1401px] top-[48px]">
        <Feed />
      </Phone>
      <Phone label="Choose Level" at="left-[2693px] top-[640px]">
        <ChooseLevel />
      </Phone>
      <Connectors id="arrow-under" paths={[[[2651, 897], [4771, 1108]]]} />
      <Phone label="Profile" at="left-[1688px] top-[48px]" cover>
        <Profile />
      </Phone>
      <Phone label="Home" at="left-[2021px] top-[48px]">
        <Friends />
      </Phone>
      <Phone label="Home" at="left-[261px] top-[640px]">
        <SearchPeople />
      </Phone>
      <Phone label="Person's Profile" at="left-[539px] top-[640px]" cover>
        <PersonProfile />
      </Phone>
      <Phone label="Message" at="left-[836px] top-[640px]">
        <EmptyMessage />
      </Phone>
      <Phone label="Messages Screen" at="left-[261px] top-[1202px]">
        <Messages />
      </Phone>
      <Phone label="Message 2" at="left-[551px] top-[1202px]">
        <Conversation />
      </Phone>
      <Phone label="Choose Lesson" at="left-[2978px] top-[640px]">
        <ChooseLesson />
      </Phone>
      <Phone label="Lesson Prompt" at="left-[3263px] top-[640px]">
        <LessonPrompt />
      </Phone>
      <Phone label="Lesson" at="left-[3546px] top-[640px]">
        <LessonCard />
      </Phone>
      <Phone label="Lesson" at="left-[3828px] top-[640px]">
        <LessonDone />
      </Phone>
      <Connectors id="arrow-over" paths={arrows}>
        <path d="M1210 423L1256 427" />
      </Connectors>
      <span className="absolute left-[754px] top-[253px] text-[10px]">Open App</span>
    </div>
  );
}
